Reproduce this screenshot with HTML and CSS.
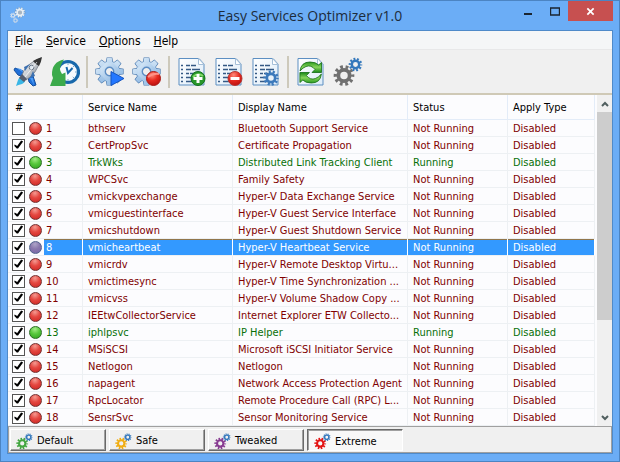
FILE: index.html
```html
<!DOCTYPE html>
<html lang="en">
<head>
<meta charset="utf-8">
<title>Easy Services Optimizer v1.0</title>
<link rel="stylesheet" href="styles.css">
</head>
<body>
<svg class="defs" aria-hidden="true">
  <defs>
    <linearGradient id="blueGear" x1="0" y1="0" x2="1" y2="1"><stop offset="0" stop-color="#e2f0fb"/><stop offset="1" stop-color="#84b1df"/></linearGradient>
    <linearGradient id="paper" x1="0" y1="0" x2="1" y2="1"><stop offset="0" stop-color="#fff"/><stop offset="1" stop-color="#dcebf8"/></linearGradient>
    <linearGradient id="arrows" x1="0" y1="0" x2="0" y2="1"><stop offset="0" stop-color="#2a9a1e"/><stop offset=".5" stop-color="#86d45c"/><stop offset="1" stop-color="#178716"/></linearGradient>
    <linearGradient id="body" x1="0" y1="0" x2="1" y2="1"><stop offset="0" stop-color="#fff"/><stop offset=".5" stop-color="#c8cdd3"/><stop offset="1" stop-color="#596069"/></linearGradient>
    <radialGradient id="ball" cx=".4" cy=".25" r=".8"><stop offset="0" stop-color="#ff8a7a"/><stop offset=".5" stop-color="#e62a20"/><stop offset="1" stop-color="#b80d0d"/></radialGradient>
    <g id="teeth8">
      <circle r="10"/>
      <path d="M-2.3-13.5h4.6l.8 5h-6.2zM-2.3 13.5h4.6l.8-5h-6.2zM-13.5-2.3v4.6l5 .8v-6.2zM13.5-2.3v4.6l-5 .8v-6.2z"/>
      <path transform="rotate(45)" d="M-2.3-13.5h4.6l.8 5h-6.2zM-2.3 13.5h4.6l.8-5h-6.2zM-13.5-2.3v4.6l5 .8v-6.2zM13.5-2.3v4.6l-5 .8v-6.2z"/>
    </g>
    <g id="ring" fill="none" stroke="currentColor">
      <circle r="6" stroke-width="4"/>
      <circle r="9" stroke-width="4" stroke-dasharray="2.9 2.755" stroke-dashoffset="1.45"/>
    </g>
    <path id="arrow" d="M4 14Q5 5 14 5q6 0 8.500 3l3-2.500v10H16l3-3q-4-5-9-3-3 1-6 4.500z"/>
    <symbol id="gear" viewBox="0 0 30 30">
      <g transform="translate(14.5 14.5)">
        <use href="#teeth8" fill="#4677ae" stroke="#4677ae" stroke-width="1.2"/>
        <use href="#teeth8" fill="url(#blueGear)"/>
        <circle r="4.2" fill="#efefef" stroke="#5c8dc4" stroke-width="1.4"/>
      </g>
    </symbol>
    <symbol id="gears" viewBox="0 0 30 30">
      <use href="#ring" class="main-gear" transform="translate(11 18.5) scale(.94)"/>
      <use href="#ring" class="small-gear" transform="translate(22.5 7.5) scale(.62)"/>
    </symbol>
    <symbol id="sheet" viewBox="0 0 30 30">
      <path d="M2 1.5h20l5 5.5v21H2z" fill="url(#paper)" stroke="#5d8fc2"/>
      <path d="M21.500 1.500v6H27z" fill="#fff" stroke="#a5bfd8"/>
    </symbol>
    <symbol id="list" viewBox="0 0 30 30">
      <use href="#sheet"/>
      <path d="M4 8.500h2M4 12.500h2M4 16.500h2M4 20.500h2M4 24.500h2M9 8.500h4M14 8.500h5M9 12.500h5M15 12.500h8M9 16.500h3M13 16.500h9M9 20.500h12M9 24.500h10" stroke="#345985" stroke-width="1.300"/>
    </symbol>
  </defs>
</svg>

<main class="window">
  <header class="titlebar">
    <svg class="app-icon" viewBox="0 0 16 16" aria-hidden="true"><g transform="translate(10 5.500) scale(.46)"><circle r="10.500" fill="none" stroke="#7d8a96" stroke-width="2" stroke-dasharray="2.900 2.755"/><use href="#ring" color="#e9eef2"/></g><g transform="translate(3 8.500) scale(.26)"><use href="#ring" color="#dce4ec"/></g><g transform="translate(5.500 13.500) scale(.24)"><use href="#ring" color="#d7dfe7"/></g><circle cx="10" cy="5.500" r="2" fill="#a9b4be"/></svg>
    <h1>Easy Services Optimizer v1.0</h1>
    <div class="controls">
      <button aria-label="Minimize"><svg viewBox="0 0 10 9"><path d="M1 7h8" stroke="#1b2530" stroke-width="2"/></svg></button>
      <button aria-label="Maximize"><svg viewBox="0 0 10 9"><path d="M.5 1v7h9V1zM0 1h10" fill="none" stroke="#1b2530" stroke-width="1.400"/></svg></button>
      <button class="close" aria-label="Close"><svg viewBox="0 0 10 9"><path d="M1.500 1l7 7M8.500 1l-7 7" stroke="#fff" stroke-width="1.900"/></svg></button>
    </div>
  </header>

  <div class="client">
    <nav class="menu">
      <a href="#file"><u>F</u>ile</a><a href="#service"><u>S</u>ervice</a><a href="#options"><u>O</u>ptions</a><a href="#help"><u>H</u>elp</a>
    </nav>

    <div class="toolbar">
      <button aria-label="Optimize"><svg viewBox="0 0 30 30">
        <path d="M10 14L2 11l-1 2 4 5 6 2zM15 20l1 5 4 4 3-1-3-9z" fill="#1f6fd8" stroke="#164f9c"/>
        <path d="M3 11l5 1 3 4zM17 21l4 7-1-7z" fill="#4c9bf4"/>
        <path d="M5 23q2-5 6-3 3 5-2 7-4 1-6 2z" fill="#39b6e6"/>
        <path d="M9 18q3-11 19-17-4 16-15 22z" fill="url(#body)" stroke="#747b85" stroke-width=".8"/>
        <path d="M20 4q3-2 9-4-1 6-3 9-3-1-6-5z" fill="#343434"/>
        <path d="M9 17l5 5-3 3-5-4z" fill="#565e6e"/>
        <path d="M11 10l6-3-5 7zM20 14l2 5-5 2z" fill="#3c70b0"/>
        <circle cx="18.500" cy="10.500" r="2.300" fill="#dae4ee" stroke="#687585"/>
        <path d="M12 20L24 5" stroke="#fff" stroke-width=".7"/>
      </svg></button>
      <button aria-label="Restore"><svg viewBox="0 0 30 30">
        <circle cx="18" cy="15" r="10.500" fill="#f7fafd" stroke="#1868ab" stroke-width="3.200"/>
        <path d="M18 6v2M27 15h-2M24.200 8.800l-1.400 1.400M24.200 21.200l-1.400-1.400M18 24v-2" stroke="#77a6cc"/>
        <path d="M16.500 10l1.500 6 4.500-5" fill="none" stroke="#1868ab" stroke-width="2"/>
        <path d="M14 2.500Q1.500 5 2 18l1 3-3 8h15.500V15.500L12 17q-4-5 0-11z" fill="#3caa4b"/>
      </svg></button>
      <hr>
      <button aria-label="Start service"><svg viewBox="0 0 30 30"><use href="#gear"/><path d="M16 14.500v14L29 21.500z" fill="#2377ff" stroke="#1454bf"/></svg></button>
      <button aria-label="Stop service"><svg viewBox="0 0 30 30"><use href="#gear"/><circle cx="21.500" cy="21.500" r="7" fill="url(#ball)" stroke="#a91c18"/><path d="M16 20q5-4 11-3" fill="none" stroke="#ff9187" stroke-width="2"/></svg></button>
      <hr>
      <button aria-label="Add service"><svg viewBox="0 0 30 30"><use href="#list"/><circle cx="21" cy="21.500" r="7" fill="#28972b" stroke="#14711d"/><path d="M16 20q5-5 10-1" fill="none" stroke="#83d969" stroke-width="2"/><path d="M21 17v9M16.500 21.500h9" stroke="#fff" stroke-width="3"/></svg></button>
      <button aria-label="Remove service"><svg viewBox="0 0 30 30"><use href="#list"/><circle cx="21" cy="21.500" r="7" fill="url(#ball)" stroke="#b53a35"/><path d="M16.500 21.500h9" stroke="#fff" stroke-width="3"/></svg></button>
      <button aria-label="Service settings"><svg viewBox="0 0 30 30"><use href="#list"/><circle cx="20" cy="21" r="5" fill="#e8f1f9"/><use href="#ring" color="#3c79bb" transform="translate(20 21) scale(.7)"/></svg></button>
      <hr>
      <button aria-label="Refresh"><svg viewBox="0 0 30 30"><use href="#sheet"/><g fill="url(#arrows)" stroke="#116c13" stroke-width=".8"><use href="#arrow"/><use href="#arrow" transform="rotate(180 14.700 15.500)"/></g></svg></button>
      <button class="gray" aria-label="Preferences"><svg viewBox="0 0 30 30"><use href="#gears"/></svg></button>
    </div>

    <div class="list">
      <table>
        <colgroup><col class="c-num"><col class="c-name"><col class="c-display"><col class="c-status"><col class="c-type"></colgroup>
        <thead><tr><th>#</th><th>Service Name</th><th>Display Name</th><th>Status</th><th>Apply Type</th></tr></thead>
        <tbody>
          <tr><td><label><input type="checkbox"><i></i><b>1</b></label></td><td>bthserv</td><td>Bluetooth Support Service</td><td>Not Running</td><td>Disabled</td></tr>
          <tr><td><label><input type="checkbox" checked><i></i><b>2</b></label></td><td>CertPropSvc</td><td>Certificate Propagation</td><td>Not Running</td><td>Disabled</td></tr>
          <tr class="running"><td><label><input type="checkbox" checked><i></i><b>3</b></label></td><td>TrkWks</td><td>Distributed Link Tracking Client</td><td>Running</td><td>Disabled</td></tr>
          <tr><td><label><input type="checkbox" checked><i></i><b>4</b></label></td><td>WPCSvc</td><td>Family Safety</td><td>Not Running</td><td>Disabled</td></tr>
          <tr><td><label><input type="checkbox" checked><i></i><b>5</b></label></td><td>vmickvpexchange</td><td>Hyper-V Data Exchange Service</td><td>Not Running</td><td>Disabled</td></tr>
          <tr><td><label><input type="checkbox" checked><i></i><b>6</b></label></td><td>vmicguestinterface</td><td>Hyper-V Guest Service Interface</td><td>Not Running</td><td>Disabled</td></tr>
          <tr><td><label><input type="checkbox" checked><i></i><b>7</b></label></td><td>vmicshutdown</td><td>Hyper-V Guest Shutdown Service</td><td>Not Running</td><td>Disabled</td></tr>
          <tr class="selected"><td><label><input type="checkbox" checked><i></i><b>8</b></label></td><td>vmicheartbeat</td><td>Hyper-V Heartbeat Service</td><td>Not Running</td><td>Disabled</td></tr>
          <tr><td><label><input type="checkbox" checked><i></i><b>9</b></label></td><td>vmicrdv</td><td>Hyper-V Remote Desktop Virtu...</td><td>Not Running</td><td>Disabled</td></tr>
          <tr><td><label><input type="checkbox" checked><i></i><b>10</b></label></td><td>vmictimesync</td><td>Hyper-V Time Synchronization ...</td><td>Not Running</td><td>Disabled</td></tr>
          <tr><td><label><input type="checkbox" checked><i></i><b>11</b></label></td><td>vmicvss</td><td>Hyper-V Volume Shadow Copy ...</td><td>Not Running</td><td>Disabled</td></tr>
          <tr><td><label><input type="checkbox" checked><i></i><b>12</b></label></td><td>IEEtwCollectorService</td><td>Internet Explorer ETW Collecto...</td><td>Not Running</td><td>Disabled</td></tr>
          <tr class="running"><td><label><input type="checkbox" checked><i></i><b>13</b></label></td><td>iphlpsvc</td><td>IP Helper</td><td>Running</td><td>Disabled</td></tr>
          <tr><td><label><input type="checkbox" checked><i></i><b>14</b></label></td><td>MSiSCSI</td><td>Microsoft iSCSI Initiator Service</td><td>Not Running</td><td>Disabled</td></tr>
          <tr><td><label><input type="checkbox" checked><i></i><b>15</b></label></td><td>Netlogon</td><td>Netlogon</td><td>Not Running</td><td>Disabled</td></tr>
          <tr><td><label><input type="checkbox" checked><i></i><b>16</b></label></td><td>napagent</td><td>Network Access Protection Agent</td><td>Not Running</td><td>Disabled</td></tr>
          <tr><td><label><input type="checkbox" checked><i></i><b>17</b></label></td><td>RpcLocator</td><td>Remote Procedure Call (RPC) L...</td><td>Not Running</td><td>Disabled</td></tr>
          <tr><td><label><input type="checkbox" checked><i></i><b>18</b></label></td><td>SensrSvc</td><td>Sensor Monitoring Service</td><td>Not Running</td><td>Disabled</td></tr>
        </tbody>
      </table>
      <div class="scrollbar">
        <button aria-label="Scroll up"><svg viewBox="0 0 8 6"><path d="M1 5l3-3 3 3" fill="none" stroke="#505f5f" stroke-width="2"/></svg></button>
        <div class="track"><div class="thumb"></div></div>
        <button aria-label="Scroll down"><svg viewBox="0 0 8 6"><path d="M1 1l3 3 3-3" fill="none" stroke="#505f5f" stroke-width="2"/></svg></button>
      </div>
    </div>

    <footer class="presets">
      <button class="green"><svg viewBox="0 0 30 30"><use href="#gears"/></svg>Default</button>
      <button class="yellow"><svg viewBox="0 0 30 30"><use href="#gears"/></svg>Safe</button>
      <button class="purple"><svg viewBox="0 0 30 30"><use href="#gears"/></svg>Tweaked</button>
      <button class="red pressed" aria-pressed="true"><svg viewBox="0 0 30 30"><use href="#gears"/></svg>Extreme</button>
    </footer>
  </div>
</main>
</body>
</html>
```
FILE: styles.css
```css
* { box-sizing: border-box; }

body {
  margin: 0;
  font: 11px/16px "DejaVu Sans Condensed", "DejaVu Sans", sans-serif;
  color: #000;
}

button {
  font: inherit;
  color: inherit;
  border: 0;
  padding: 0;
  margin: 0;
  background: none;
}

.defs { position: absolute; width: 0; height: 0; }

.window {
  display: flex;
  flex-direction: column;
  min-height: 100vh;
  padding: 0 6px 7px;
  background: #6badf6;
  border: 1px solid #4c84c2;
}

.titlebar {
  display: grid;
  grid-template-columns: 1fr auto 1fr;
  align-items: start;
  height: 29px;
}

.app-icon { width: 16px; height: 16px; margin: 6px 0 0 3px; }

.titlebar h1 {
  margin: 0;
  font: 14px/30px "Open Sans", "Noto Sans", sans-serif;
  color: #1d2c3c;
}

.controls { display: flex; justify-content: flex-end; }

.controls button {
  display: grid;
  place-items: center;
  width: 27px;
  height: 20px;
}

.controls svg { width: 10px; height: 9px; }
.controls .close { width: 45px; background: #c75050; }
.controls .close svg { width: 9px; }

.client {
  flex: 1;
  display: flex;
  flex-direction: column;
  background: #f0f0f0;
  border: 1px solid #4f8ac9;
}

.menu {
  display: flex;
  gap: 13px;
  height: 19px;
  padding-left: 7px;
  font-size: 12px;
  line-height: 20px;
  background: #f5f6f7;
  border-bottom: 1px solid #e8e8e9;
}

.menu a { color: inherit; text-decoration: none; }
.menu u { text-underline-offset: 1px; }

.toolbar {
  display: flex;
  align-items: center;
  height: 45px;
  padding: 0 1px;
  border-bottom: 2px solid #cfc9b6;
}

.toolbar button {
  display: grid;
  place-items: center;
  width: 37px;
  height: 36px;
}

.toolbar svg { width: 30px; height: 30px; }

.toolbar hr {
  width: 2px;
  height: 32px;
  margin: 0 3px;
  border: 0;
  background: #cdc9bb;
}

.main-gear { color: var(--gear); }
.small-gear { color: #3478bc; }
.gray { --gear: #707070; }
.green { --gear: #43a640; }
.yellow { --gear: #f0ad12; }
.purple { --gear: #873b91; }
.red { --gear: #e31313; }

.list { flex: 1; display: flex; background: #fcfcfe; }

table {
  flex: 1;
  align-self: start;
  table-layout: fixed;
  width: 100%;
  border-collapse: separate;
  border-spacing: 0;
  margin-right: 2px;
}

.c-num { width: 75px; }
.c-name { width: 150px; }
.c-display { width: 175px; }
.c-status { width: 100px; }

th, td {
  height: 17px;
  padding: 0 0 0 5px;
  border-right: 1px solid #edf0f3;
  border-bottom: 1px solid #edf0f3;
  font-weight: 400;
  text-align: left;
  white-space: nowrap;
  overflow: hidden;
}

th { height: 25px; padding-top: 2px; border-color: #e3ecf8; }
th:first-child { padding-left: 7px; }
td { padding-top: 2px; color: #800000; line-height: 14px; }
td:first-child { padding: 0 0 0 4px; }
.running td { color: #087008; }

label { display: flex; align-items: center; height: 16px; }

label b {
  flex: 1;
  height: 16px;
  margin-left: 2px;
  padding: 2px 0 0 2px;
  font-weight: 400;
}

input {
  appearance: none;
  width: 13px;
  height: 13px;
  margin: 0;
  background: #fff;
  border: 1px solid #555;
}

input:checked::before {
  content: "";
  display: block;
  height: 11px;
  background: #000;
  clip-path: polygon(15% 45%, 38% 58%, 74% 10%, 92% 18%, 46% 82%, 34% 82%, 12% 58%);
}

i {
  width: 13px;
  height: 13px;
  margin-left: 4px;
  border: 1px solid #74302f;
  border-radius: 50%;
  background: radial-gradient(circle at 45% 20%, #f49a91, #e54841 45%, #ca2320);
}

.running i {
  border-color: #2b6e22;
  background: radial-gradient(circle at 45% 20%, #a5eb88, #59c83d 45%, #2c9e1d);
}

.selected i {
  border-color: #50628c;
  background: radial-gradient(circle at 45% 20%, #ada4c8, #8a78ad 45%, #7565a7);
}

.selected td { color: #fff; border-right-color: #fff; }
.selected td:not(:first-child), .selected b { background: #3399ff; box-shadow: inset 0 1px #91764c; }

.scrollbar {
  display: flex;
  flex-direction: column;
  width: 15px;
  background: #f0f0f0;
}

.scrollbar button { display: grid; place-items: center; height: 17px; }
.scrollbar svg { width: 8px; height: 6px; }
.track { flex: 1; }
.thumb { height: 70%; background: #cdcdcd; }

.presets {
  display: flex;
  gap: 3px;
  height: 27px;
  padding: 2px 1px 1px;
  border: 1px solid #a0a0a0;
}

.presets button {
  display: flex;
  align-items: center;
  gap: 4px;
  width: 96px;
  padding: 2px 0 0 5px;
  background: #f0f0f0;
  border: 1px solid;
  border-color: #fff #696969 #696969 #fff;
  box-shadow: inset -1px -1px #a0a0a0;
}

.presets svg { width: 17px; height: 17px; }

.presets .pressed {
  padding: 3px 0 0 6px;
  background: #f8f8f8;
  border-color: #696969 #fff #fff #696969;
  box-shadow: inset 1px 1px #a0a0a0;
}
```
